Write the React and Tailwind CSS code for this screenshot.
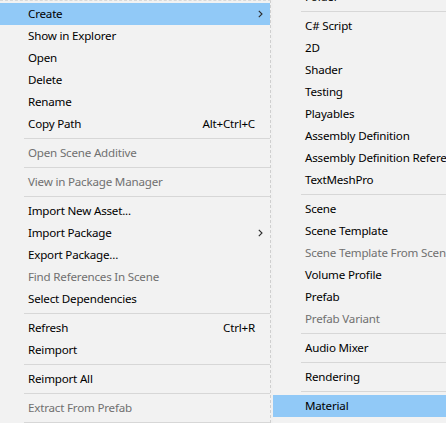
import React from 'react';

const leftItems = [
    { label: 'Create', highlight: true, submenu: true },
    { label: 'Show in Explorer' },
    { label: 'Open' },
    { label: 'Delete' },
    { label: 'Rename' },
    { label: 'Copy Path', shortcut: 'Alt+Ctrl+C' },
    { sep: true },
    { label: 'Open Scene Additive', disabled: true },
    { sep: true },
    { label: 'View in Package Manager', disabled: true },
    { sep: true },
    { label: 'Import New Asset...' },
    { label: 'Import Package', submenu: true },
    { label: 'Export Package...' },
    { label: 'Find References In Scene', disabled: true },
    { label: 'Select Dependencies' },
    { sep: true },
    { label: 'Refresh', shortcut: 'Ctrl+R' },
    { label: 'Reimport' },
    { sep: true },
    { label: 'Reimport All' },
    { sep: true },
    { label: 'Extract From Prefab', disabled: true },
    { sep: true },
];

const rightItems = [
    { label: 'Folder' },
    { sep: true },
    { label: 'C# Script' },
    { label: '2D' },
    { label: 'Shader' },
    { label: 'Testing' },
    { label: 'Playables' },
    { label: 'Assembly Definition' },
    { label: 'Assembly Definition Reference' },
    { label: 'TextMeshPro' },
    { sep: true },
    { label: 'Scene' },
    { label: 'Scene Template' },
    { label: 'Scene Template From Scene', disabled: true },
    { label: 'Volume Profile' },
    { label: 'Prefab' },
    { label: 'Prefab Variant', disabled: true },
    { sep: true },
    { label: 'Audio Mixer' },
    { sep: true },
    { label: 'Rendering' },
    { sep: true },
    { label: 'Material', highlight: true },
];

function Chevron() {
    return (
        <svg width="5" height="8" viewBox="0 0 5 8" className="shrink-0">
            <path d="M0.8 0.8 L4 4 L0.8 7.2" fill="none" stroke="#2b2b2b" strokeWidth="1.1" />
        </svg>
    );
}

function MenuRow({ item, textPad, sepPad, rightPad }) {
    if (item.sep) {
        return (
            <div className="h-[7px] flex items-center" style={{ paddingLeft: sepPad }}>
                <div className="h-px w-full bg-[#d7d7d7]" />
            </div>
        );
    }
    return (
        <div
            className={`h-[22px] shrink-0 flex items-center whitespace-nowrap ${
                item.highlight ? 'bg-[#91c9f7]' : ''
            } ${item.disabled ? 'text-[#707070]' : 'text-[#000000]'}`}
            style={{ paddingLeft: textPad, paddingRight: rightPad }}
        >
            <span className="flex-1">{item.label}</span>
            {item.shortcut && <span>{item.shortcut}</span>}
            {item.submenu && <Chevron />}
        </div>
    );
}

export default function App() {
    return (
        <div
            className="w-[446px] h-[423px] overflow-hidden flex bg-[#f0f0f0] text-[11.6px] leading-none tracking-[-0.2px]"
            style={{ fontFamily: '"Noto Sans", "Liberation Sans", sans-serif' }}
        >
            <div className="w-[271px] shrink-0 h-full flex flex-col bg-[#f2f2f2] border-r border-[#cfcfcf] pt-[3px] border-t border-t-[#d9d9d9] border-dashed">
                <div className="-mt-[1px] flex flex-col">
                    {leftItems.map((item, i) => (
                        <MenuRow
                            key={i}
                            item={item}
                            textPad={28}
                            sepPad={24}
                            rightPad={item.submenu ? 7 : 15}
                        />
                    ))}
                </div>
            </div>
            <div className="ml-[2px] flex-1 h-full overflow-hidden bg-[#f2f2f2]">
                <div className="-mt-[14px] flex flex-col">
                    {rightItems.map((item, i) => (
                        <MenuRow key={i} item={item} textPad={32} sepPad={28} rightPad={0} />
                    ))}
                </div>
            </div>
        </div>
    );
}
